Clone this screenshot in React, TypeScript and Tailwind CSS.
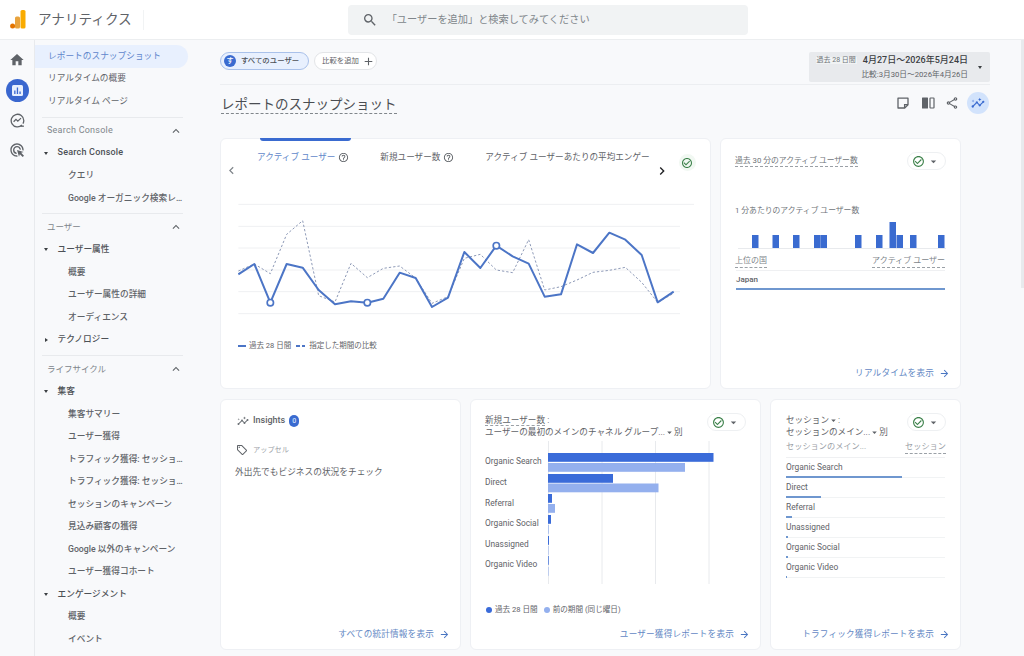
import React from "react";
import {
  MdHome, MdOutlineAdsClick, MdSearch, MdKeyboardArrowUp, MdArrowDropDown, MdChevronLeft, MdChevronRight,
  MdAdd, MdArrowForward, MdHelpOutline, MdCheckCircleOutline, MdOutlineLocalOffer, MdOutlineShare, MdInsights,
} from "react-icons/md";

const font = "font-['Roboto','Noto_Sans_CJK_JP',sans-serif]";

type Row = { t: string; k: "top" | "head" | "group" | "groupClosed" | "item" | "divider"; active?: boolean };
const nav: Row[] = [
  { t: "レポートのスナップショット", k: "top", active: true },
  { t: "リアルタイムの概要", k: "top" },
  { t: "リアルタイム ページ", k: "top" },
  { t: "", k: "divider" },
  { t: "Search Console", k: "head" },
  { t: "Search Console", k: "group" },
  { t: "クエリ", k: "item" },
  { t: "Google オーガニック検索レ…", k: "item" },
  { t: "", k: "divider" },
  { t: "ユーザー", k: "head" },
  { t: "ユーザー属性", k: "group" },
  { t: "概要", k: "item" },
  { t: "ユーザー属性の詳細", k: "item" },
  { t: "オーディエンス", k: "item" },
  { t: "テクノロジー", k: "groupClosed" },
  { t: "", k: "divider" },
  { t: "ライフサイクル", k: "head" },
  { t: "集客", k: "group" },
  { t: "集客サマリー", k: "item" },
  { t: "ユーザー獲得", k: "item" },
  { t: "トラフィック獲得: セッショ…", k: "item" },
  { t: "トラフィック獲得: セッショ…", k: "item" },
  { t: "セッションのキャンペーン", k: "item" },
  { t: "見込み顧客の獲得", k: "item" },
  { t: "Google 以外のキャンペーン", k: "item" },
  { t: "ユーザー獲得コホート", k: "item" },
  { t: "エンゲージメント", k: "group" },
  { t: "概要", k: "item" },
  { t: "イベント", k: "item" },
];

function NavRow({ r }: { r: Row }) {
  const latin = r.t === "Search Console";
  if (r.k === "divider")
    return <div className="h-px bg-[#e8eaed] ml-[7px] mr-[12px] mt-[4px] mb-[1.8px]" />;
  if (r.k === "head")
    return (
      <div className={`h-[22.5px] flex items-center pl-[12px] pr-[12px] justify-between text-[#80868b] ${latin ? "text-[9px] tracking-[0.25px]" : "text-[8.5px]"}`}>
        <span>{r.t}</span>
        <MdKeyboardArrowUp className="text-[14px] text-[#5f6368]" />
      </div>
    );
  if (r.k === "group" || r.k === "groupClosed")
    return (
      <div className={`h-[22.5px] flex items-center font-medium text-[#4d5156] ${latin ? "text-[9px] tracking-[0.2px]" : "text-[8.7px]"}`}>
        <span className="w-[22.5px] flex justify-end pr-[10px]">
          {r.k === "group" ? (
            <span className="w-0 h-0 border-x-[2.5px] border-x-transparent border-t-[3px] border-t-[#3c4043]" />
          ) : (
            <span className="w-0 h-0 border-y-[2.5px] border-y-transparent border-l-[3px] border-l-[#3c4043]" />
          )}
        </span>
        <span className="whitespace-nowrap">{r.t}</span>
      </div>
    );
  if (r.k === "item")
    return (
      <div className="h-[22.5px] flex items-center pl-[33px] text-[8.7px] font-medium text-[#5f6368]">
        <span className="whitespace-nowrap">{r.t}</span>
      </div>
    );
  return (
    <div
      className={`h-[22.5px] flex items-center pl-[13px] w-[153px] text-[8.7px] rounded-r-full ${
        r.active ? "bg-[#e8f0fe] text-[#5f86cc]" : "text-[#5f6368]"
      }`}
    >
      {r.t}
    </div>
  );
}

const Logo = () => (
  <svg width="16" height="19" viewBox="0 0 16 19" className="shrink-0">
    <rect x="10.5" y="0" width="5" height="18.5" rx="1.6" fill="#f9ab00" />
    <rect x="5" y="6.5" width="5" height="12" rx="1.6" fill="#e8a33d" />
    <circle cx="2.6" cy="16" r="2.5" fill="#e37400" />
  </svg>
);

const Card = ({ className, children }: { className: string; children: React.ReactNode }) => (
  <div className={`bg-white rounded-[6px] border border-[#eef0f4] flex flex-col shrink-0 ${className}`}>{children}</div>
);

const Link = ({ t }: { t: string }) => (
  <div className="mt-auto mb-[8px] mr-[10px] flex justify-end items-center gap-[5px] text-[8.6px] tracking-[0.2px] text-[#6388c4] h-[14px]">
    <span>{t}</span>
    <MdArrowForward className="text-[11px] text-[#4a76c2]" />
  </div>
);

const Pill = () => (
  <div className="w-[39px] h-[18px] rounded-full border border-[#eef0f2] flex items-center pl-[4px] shrink-0">
    <MdCheckCircleOutline className="text-[13px] text-[#3b8049]" />
    <MdArrowDropDown className="text-[13px] text-[#5f6368] ml-[2px]" />
  </div>
);

const Dashed = ({ children, className = "" }: { children: React.ReactNode; className?: string }) => (
  <span className={`border-b border-dashed border-[#9aa0a6] ${className}`}>{children}</span>
);

const main = "85,433 133,402 181,518 230,402 278,413 326,480 375,523 423,514 472,518 520,506 569,428 617,444 666,531 714,503 763,366 811,414 859,347 908,379 956,401 1004,500 1053,493 1101,343 1149,369 1198,308 1246,329 1295,375 1343,517 1391,485";
const prev = "85,423 133,402 181,431 230,313 278,272 326,497 375,516 423,400 472,443 520,415 569,408 617,444 666,520 714,500 763,385 811,373 859,420 908,428 956,329 1004,480 1053,470 1101,450 1149,427 1198,421 1246,412 1295,457 1343,517 1391,490";

const LineChart = () => (
  <svg width="456" height="134" viewBox="0 210 1368 402" className="block">
    <g transform="translate(-84 0)">
      <line x1="85" x2="1455" y1="223" y2="223" stroke="#eff0f2" strokeWidth="3" />
      {[289, 354, 420, 485, 551].map((y) => (
        <line key={y} x1="85" x2="1410" y1={y} y2={y} stroke="#eff0f2" strokeWidth="3" />
      ))}
      <polyline points={prev} fill="none" stroke="#8f9bb8" strokeWidth="3" strokeDasharray="7 6" />
      <polyline points={main} fill="none" stroke="#4c75c6" strokeWidth="6" strokeLinejoin="round" />
      {[[181, 518], [472, 518], [859, 347]].map(([x, y]) => (
        <circle key={x} cx={x} cy={y} r="9.5" fill="#fff" stroke="#4c75c6" strokeWidth="5" />
      ))}
    </g>
  </svg>
);

const RealtimeBars = () => {
  const bars: [number, number, number][] = [
    [752, 6.5, 13], [772.5, 6.5, 13], [793, 6.5, 13], [814, 6.5, 13], [820.5, 6.5, 13], [855, 6.5, 13],
    [876, 6.5, 13], [889.5, 6.5, 26], [896.5, 6.5, 13], [910, 6.5, 13], [938, 6.5, 13],
  ];
  return (
    <svg width="210" height="27" viewBox="0 0 210 27" className="block">
      {bars.map(([x, w, h]) => (
        <rect key={x} x={x - 736} y={26 - h} width={w} height={h} fill="#3a6bd0" />
      ))}
      <line x1="2" x2="210" y1="26.5" y2="26.5" stroke="#e8eaed" />
    </svg>
  );
};

const ChannelBars = () => {
  const rows: [number, number, number, number][] = [
    [12, 165.5, 22, 137],
    [33, 65, 42.5, 110.5],
    [53, 4, 63, 7],
    [74, 3, 84, 0.7],
    [95, 1, 105, 0.5],
    [115, 0.7, 126, 0.5],
  ];
  return (
    <svg width="166" height="143" viewBox="0 0 166 143" className="block overflow-visible">
      {[0.5, 54, 107.5, 161].map((x) => (
        <line key={x} x1={x} x2={x} y1="0" y2="143" stroke="#e8eaed" />
      ))}
      {rows.map(([y1, w1, y2, w2]) => (
        <g key={y1}>
          <rect x="0" y={y1} width={w1} height="8.8" fill="#3a6bd9" />
          <rect x="0" y={y2} width={w2} height="8.8" fill="#94b0ee" />
        </g>
      ))}
    </svg>
  );
};

const sessionRows: [string, number][] = [
  ["Organic Search", 116], ["Direct", 35], ["Referral", 6], ["Unassigned", 1.5], ["Organic Social", 1.5], ["Organic Video", 1],
];

const CompareIcon = () => (
  <svg width="14" height="14" viewBox="0 0 14 14" className="text-[#5f6368]">
    <rect x="1" y="1.5" width="6" height="11" rx="0.5" fill="currentColor" />
    <rect x="9" y="2" width="4" height="10" rx="0.5" fill="none" stroke="currentColor" strokeWidth="1.2" />
  </svg>
);

const NoteIcon = () => (
  <svg width="14" height="14" viewBox="0 0 14 14" fill="none" stroke="#5f6368" strokeWidth="1.3">
    <path d="M2 2.2h10v6.5l-3.3 3.3H2z" strokeLinejoin="round" />
    <path d="M8.6 12V8.7H12" />
  </svg>
);

const ExploreIcon = () => (
  <svg width="15" height="15" viewBox="0 0 15 15" fill="none" stroke="#5f6368" strokeWidth="1.3">
    <path d="M12 12A6.3 6.3 0 1 1 13.8 7.5c0 1.2-.3 2.3-.9 3.2" />
    <path d="M3.6 8.8 6 6.4l1.8 1.7 3.2-3" />
    <path d="M10.5 13.2h3.4" />
  </svg>
);

export default function App() {
  return (
    <div className={`relative w-[1024px] h-[656px] overflow-hidden bg-[#f8f9fb] flex flex-col text-[#5f6368] ${font}`}>
      <header className="h-[40px] shrink-0 bg-white border-b border-[#eceef0] flex items-center pl-[10px]">
        <Logo />
        <div className="ml-[12px] text-[13.6px] text-[#5f6368] leading-none">アナリティクス</div>
        <div className="ml-[11px] w-px h-[20px] bg-[#f1f3f4]" />
        <div className="ml-[204px] w-[400px] h-[30px] bg-[#f1f3f4] rounded-[4px] flex items-center pl-[14px] gap-[9px]">
          <MdSearch className="text-[16px] text-[#5f6368]" />
          <span className="text-[10.2px] text-[#80868b]">「ユーザーを追加」と検索してみてください</span>
        </div>
      </header>

      <div className="flex flex-1 min-h-0">
        <nav className="w-[35px] shrink-0 border-r border-[#e8eaed] flex flex-col items-center pt-[9px] gap-[8.5px]">
          <div className="h-[21px] flex items-center"><MdHome className="text-[16px] text-[#5f6368]" /></div>
          <div className="w-[23px] h-[23px] rounded-full bg-[#3a67cf] flex items-center justify-center">
            <svg width="11" height="11" viewBox="0 0 11 11">
              <rect width="11" height="11" rx="1.5" fill="#e8f0fe" />
              <rect x="2.2" y="5.5" width="1.3" height="3.5" fill="#3a67cf" />
              <rect x="4.8" y="2.5" width="1.3" height="6.5" fill="#3a67cf" />
              <rect x="7.4" y="6.5" width="1.3" height="2.5" fill="#3a67cf" />
            </svg>
          </div>
          <div className="h-[21px] flex items-center"><ExploreIcon /></div>
          <div className="h-[21px] flex items-center"><MdOutlineAdsClick className="text-[16px] text-[#5f6368]" /></div>
        </nav>

        <aside className="w-[160px] shrink-0 pt-[5px] overflow-hidden">
          {nav.map((r, i) => (
            <NavRow key={i} r={r} />
          ))}
        </aside>

        <main className="flex-1 min-w-0 pl-[25px] pr-[34px] pt-[12px]">
          <div className="flex items-start justify-between h-[33px] border-b border-[#eceef1]">
            <div className="flex gap-[5px]">
              <div className="h-[18px] w-[89px] rounded-full bg-[#e8f0fe] border border-[#a9c1ea] flex items-center pl-[3px] gap-[5px] text-[7.4px] font-medium text-[#4d5156] whitespace-nowrap">
                <span className="w-[12px] h-[12px] rounded-full bg-[#3a6bd0] text-white text-[7px] flex items-center justify-center">す</span>
                すべてのユーザー
              </div>
              <div className="h-[18px] w-[63px] rounded-full bg-white border border-[#e3e5e8] flex items-center pl-[7px] gap-[3px] text-[7.4px] text-[#5f6368] whitespace-nowrap">
                比較を追加
                <MdAdd className="text-[13px]" />
              </div>
            </div>
            <div className="w-[181px] h-[30px] bg-[#e8eaed] rounded-[2px] flex items-center">
              <div className="w-[159px] flex flex-col items-end leading-none">
                <div className="flex items-center justify-end gap-[6px] w-full">
                  <span className="text-[7px] text-[#70757a] bg-[#f1f3f4] px-[1px] whitespace-nowrap">過去 28 日間</span>
                  <span className="text-[9px] font-medium text-[#3c4043] whitespace-nowrap">4月27日～2026年5月24日</span>
                </div>
                <div className="text-[7.7px] text-[#5f6368] mt-[6px] whitespace-nowrap">比較:3月30日～2026年4月26日</div>
              </div>
              <span className="ml-[10px] w-0 h-0 border-x-[2.5px] border-x-transparent border-t-[3px] border-t-[#3c4043]" />
            </div>
          </div>

          <div className="flex items-center justify-between h-[36px]">
            <h1 className="text-[13.5px] leading-[16px] ml-[1px] pt-[1px] font-normal text-[#4a4d52]">
              <Dashed className="pb-[1px] border-[#80868b]">レポートのスナップショット</Dashed>
            </h1>
            <div className="flex items-center mr-[1px]">
              <span className="mr-[11px]"><NoteIcon /></span>
              <span className="mr-[10px]"><CompareIcon /></span>
              <MdOutlineShare className="text-[14px] text-[#5f6368] mr-[8px]" />
              <span className="w-[22px] h-[22px] rounded-full bg-[#d2e3fc] flex items-center justify-center">
                <MdInsights className="text-[14px] text-[#3a6bd0]" />
              </span>
            </div>
          </div>

          <div className="flex flex-col gap-[10px] mt-[17px] w-[741px]">
            <div className="flex gap-[9px]">
              <Card className="w-[491px] h-[251px]">
                <div className="ml-[39px] w-[91px] h-[3px] bg-[#3a6bd0] rounded-b-[3px] -mt-px" />
                <div className="flex items-start h-[56px]">
                  <MdChevronLeft className="text-[15px] text-[#80868b] mt-[22px] ml-[3px] shrink-0" />
                  <div className="flex text-[8.6px] mt-[9px] ml-[18px] w-[395px] shrink-0 overflow-hidden whitespace-nowrap">
                    <span className="flex items-center gap-[3px] text-[#6288ca] shrink-0 h-[14px]">アクティブ ユーザー<MdHelpOutline className="text-[11px] text-[#5f6368]" /></span>
                    <span className="flex items-center gap-[3px] ml-[31px] shrink-0 h-[14px]">新規ユーザー数<MdHelpOutline className="text-[11px]" /></span>
                    <span className="ml-[31px] shrink-0 h-[14px] leading-[14px]">アクティブ ユーザーあたりの平均エンゲー</span>
                  </div>
                  <MdChevronRight className="text-[16px] text-[#202124] mt-[22px] ml-[2px] shrink-0" />
                  <span className="ml-[8.5px] mt-[13px] w-[17px] h-[17px] rounded-full bg-[#f1f8f2] flex items-center justify-center shrink-0">
                    <MdCheckCircleOutline className="text-[12px] text-[#3b8049]" />
                  </span>
                </div>
                <div className="ml-[17px] mt-[3px]"><LineChart /></div>
                <div className="ml-[17px] mt-[6px] flex items-center text-[7.5px] text-[#5f6368] h-[12px]">
                  <span className="w-[8px] h-[2px] bg-[#4c75c6] mr-[3px]" />
                  過去 28 日間
                  <span className="w-[3.5px] h-[2px] bg-[#4c75c6] ml-[5px]" />
                  <span className="w-[3.5px] h-[2px] bg-[#4c75c6] ml-[2px] mr-[4px]" />
                  指定した期間の比較
                </div>
                <div className="mt-auto" />
              </Card>

              <Card className="w-[241px] h-[251px]">
                <div className="flex justify-between items-center pl-[14px] pr-[14px] mt-[13px] h-[18px] text-[7.8px] text-[#70757a]">
                  <Dashed>過去 30 分のアクティブ ユーザー数</Dashed>
                  <Pill />
                </div>
                <div className="pl-[14px] mt-[35px] text-[7.8px] text-[#70757a] h-[12px] leading-[12px]">1 分あたりのアクティブ ユーザー数</div>
                <div className="ml-[15px] mt-[5px]"><RealtimeBars /></div>
                <div className="flex justify-between px-[14px] mx-[1px] mt-[6px] h-[13px] text-[8px] leading-[11px] text-[#80868b]">
                  <Dashed className="-ml-px">上位の国</Dashed>
                  <Dashed>アクティブ ユーザー</Dashed>
                </div>
                <div className="h-px bg-[#eff0f2] mx-[15px] mt-[2px]" />
                <div className="pl-[15px] mt-[3px] text-[8px] font-medium text-[#5f6368] h-[12px] leading-[12px]">Japan</div>
                <div className="h-[2px] bg-[#6f97cf] mx-[15px] mt-[2px]" />
                <Link t="リアルタイムを表示" />
              </Card>
            </div>

            <div className="flex gap-[9px]">
              <Card className="w-[241px] h-[251px]">
                <div className="flex items-center h-[14px] mt-[14px] ml-[15px] text-[9px] font-medium text-[#5f6368]">
                  <span className="w-[13px] mr-[4px] flex justify-center"><MdInsights className="text-[12px] text-[#70757a]" /></span>
                  Insights
                  <span className="ml-[4px] w-[10px] h-[12px] rounded-[5px] bg-[#3a6bd0] text-[#cfe0fb] text-[7px] flex items-center justify-center">0</span>
                </div>
                <div className="flex items-center h-[14px] mt-[15px] ml-[15px] text-[7.2px] text-[#9aa0a6]">
                  <MdOutlineLocalOffer className="text-[12px] text-[#5f6368] mr-[5px]" />
                  アップセル
                </div>
                <div className="ml-[14px] mt-[8px] text-[8.7px] h-[14px] leading-[14px] text-[#5f6368]">外出先でもビジネスの状況をチェック</div>
                <Link t="すべての統計情報を表示" />
              </Card>

              <Card className="w-[291px] h-[251px]">
                <div className="flex justify-between pl-[14px] pr-[14px] mt-[13px] text-[8.6px] leading-[12px] text-[#5f6368]">
                  <div className="pt-px">
                    <div><Dashed>新規ユーザー数</Dashed> :</div>
                    <div className="whitespace-nowrap flex items-center">ユーザーの最初のメインのチャネル グループ... <MdArrowDropDown className="text-[11px] -mx-[1px]" />別</div>
                  </div>
                  <Pill />
                </div>
                <div className="flex mt-[3px] ml-[14px]">
                  <div className="w-[63px] pt-[10.5px] flex flex-col text-[8.4px] text-[#5f6368]">
                    {["Organic Search", "Direct", "Referral", "Organic Social", "Unassigned", "Organic Video"].map((t) => (
                      <div key={t} className="h-[20.6px] flex items-center whitespace-nowrap">{t}</div>
                    ))}
                  </div>
                  <ChannelBars />
                </div>
                <div className="flex items-center ml-[15px] mt-[20px] text-[7.6px] h-[12px] text-[#5f6368]">
                  <span className="w-[6px] h-[6px] rounded-full bg-[#3a6bd9] mr-[3px]" />
                  過去 28 日間
                  <span className="w-[6px] h-[6px] rounded-full bg-[#94b0ee] ml-[6px] mr-[3px]" />
                  前の期間 (同じ曜日)
                </div>
                <Link t="ユーザー獲得レポートを表示" />
              </Card>

              <Card className="w-[191px] h-[251px]">
                <div className="flex justify-between pl-[15px] pr-[14px] mt-[13px] text-[8.6px] leading-[12px] text-[#5f6368]">
                  <div className="pt-px whitespace-nowrap">
                    <div className="flex items-center">セッション<MdArrowDropDown className="text-[11px] -mx-[1px]" />:</div>
                    <div className="flex items-center">セッションのメイン...<MdArrowDropDown className="text-[11px] -mx-[1px]" />別</div>
                  </div>
                  <Pill />
                </div>
                <div className="flex justify-between pl-[15px] pr-[14px] mt-[3px] h-[13px] text-[8.2px] leading-[11px] text-[#9aa0a6]">
                  <span>セッションのメイン...</span>
                  <Dashed>セッション</Dashed>
                </div>
                <div className="h-px bg-[#eff0f2] mx-[15px] mt-[3px]" />
                {sessionRows.map(([t, w]) => (
                  <div key={t} className="mx-[15px] h-[20px] flex flex-col justify-end border-b border-[#f1f3f4] last:border-b-0">
                    <div className="text-[8.4px] text-[#5f6368] h-[12px] leading-[12px] mb-[3px]">{t}</div>
                    <div className="h-[2px] bg-[#6f97cf] shrink-0 -mb-px" style={{ width: w }} />
                  </div>
                ))}
                <Link t="トラフィック獲得レポートを表示" />
              </Card>
            </div>
          </div>
        </main>
      </div>
      <div className="absolute right-0 top-[40px] w-[3px] h-[248px] bg-[#e8eaed]" />
    </div>
  );
}
